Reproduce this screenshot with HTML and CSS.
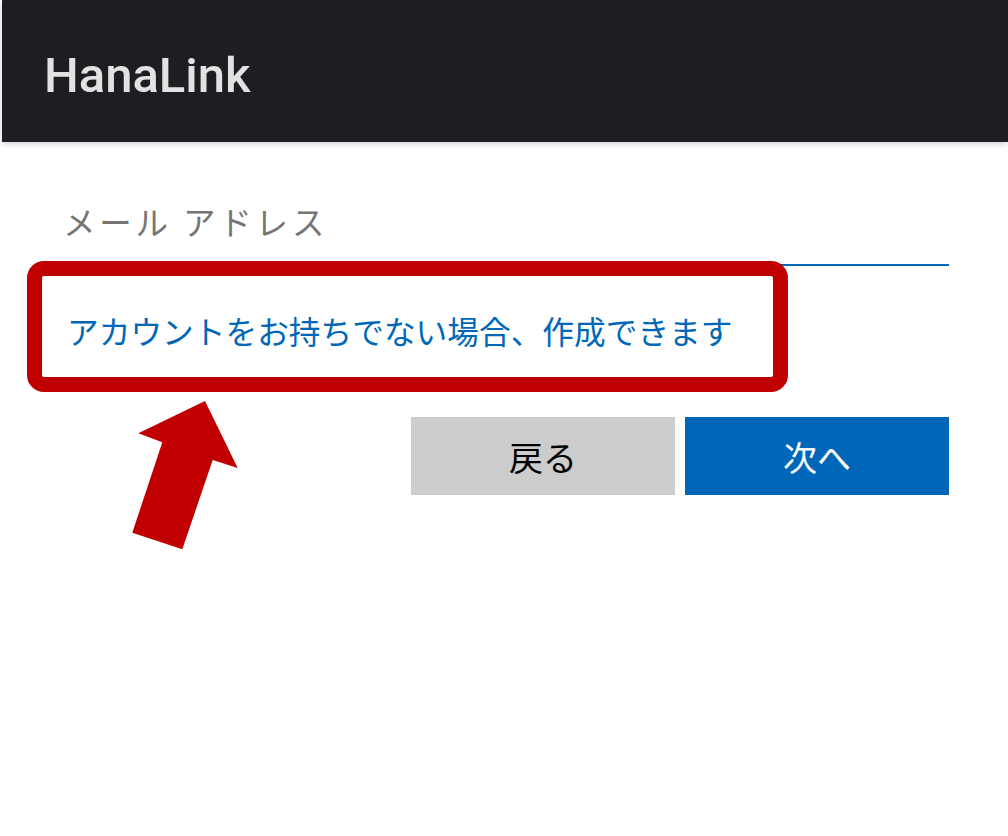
FILE: index.html
```
<html>
<head>
<title>HanaLink</title>
<link rel="stylesheet" href="styles.css">
</head>
<body>
<div class="appbar">
  <span class="brand">HanaLink</span>
</div>

<div class="signin">
  <div class="field">
    <label class="field-label">メール アドレス</label>
  </div>
  <a class="create-link" href="#">アカウントをお持ちでない場合、作成できます</a>
  <div class="actions">
    <button class="btn btn-back" type="button">戻る</button>
    <button class="btn btn-next" type="button">次へ</button>
  </div>
</div>

<!-- callout over the sign-up link -->
<div class="callout-box"></div>
<svg class="callout-arrow" width="120" height="160" viewBox="0 0 120 160">
  <polygon fill="#c00000" points="85,1 117.7,68 92.7,60 62.3,149.3 12.3,132.7 42.3,42.3 18.3,33.3"/>
</svg>
</body>
</html>
```

FILE: styles.css
```
body { margin:0; background:#fff; font-family:"Noto Sans CJK JP", "Noto Sans", sans-serif; }

.appbar { height:142px; box-sizing:border-box; padding:8px 0 0 42px; margin-left:2px; background:#1e1d22;
  box-shadow:0 2px 6px rgba(0,0,0,0.18); display:flex; align-items:center; }
.brand { font-family:Roboto, "Noto Sans", sans-serif; font-weight:500; font-size:49px; color:#e2e2e2; }

.signin { padding:55px 59px 0 63px; }

.field { border-bottom:2px solid #0067b8; padding-bottom:19px; }
.field-label { display:block; font-size:32.5px; line-height:48px; letter-spacing:3.8px; color:#757575; }

.create-link { display:block; margin-top:40px; padding-left:4px; font-size:31.7px; line-height:48px;
  color:#0067b8; text-decoration:none; }

.actions { display:flex; justify-content:flex-end; gap:10px; margin-top:63px; }
.btn { width:264px; height:78px; border:none; font-family:"Noto Sans CJK JP", sans-serif; font-size:34px; }
.btn-back { background:#cccccc; color:#000; }
.btn-next { background:#0067b8; color:#fff; }

.callout-box { position:absolute; left:27px; top:261px; width:761px; height:131px; box-sizing:border-box;
  border:15px solid #c00000; border-radius:17px; }
.callout-arrow { position:absolute; left:120px; top:400px; }
```
